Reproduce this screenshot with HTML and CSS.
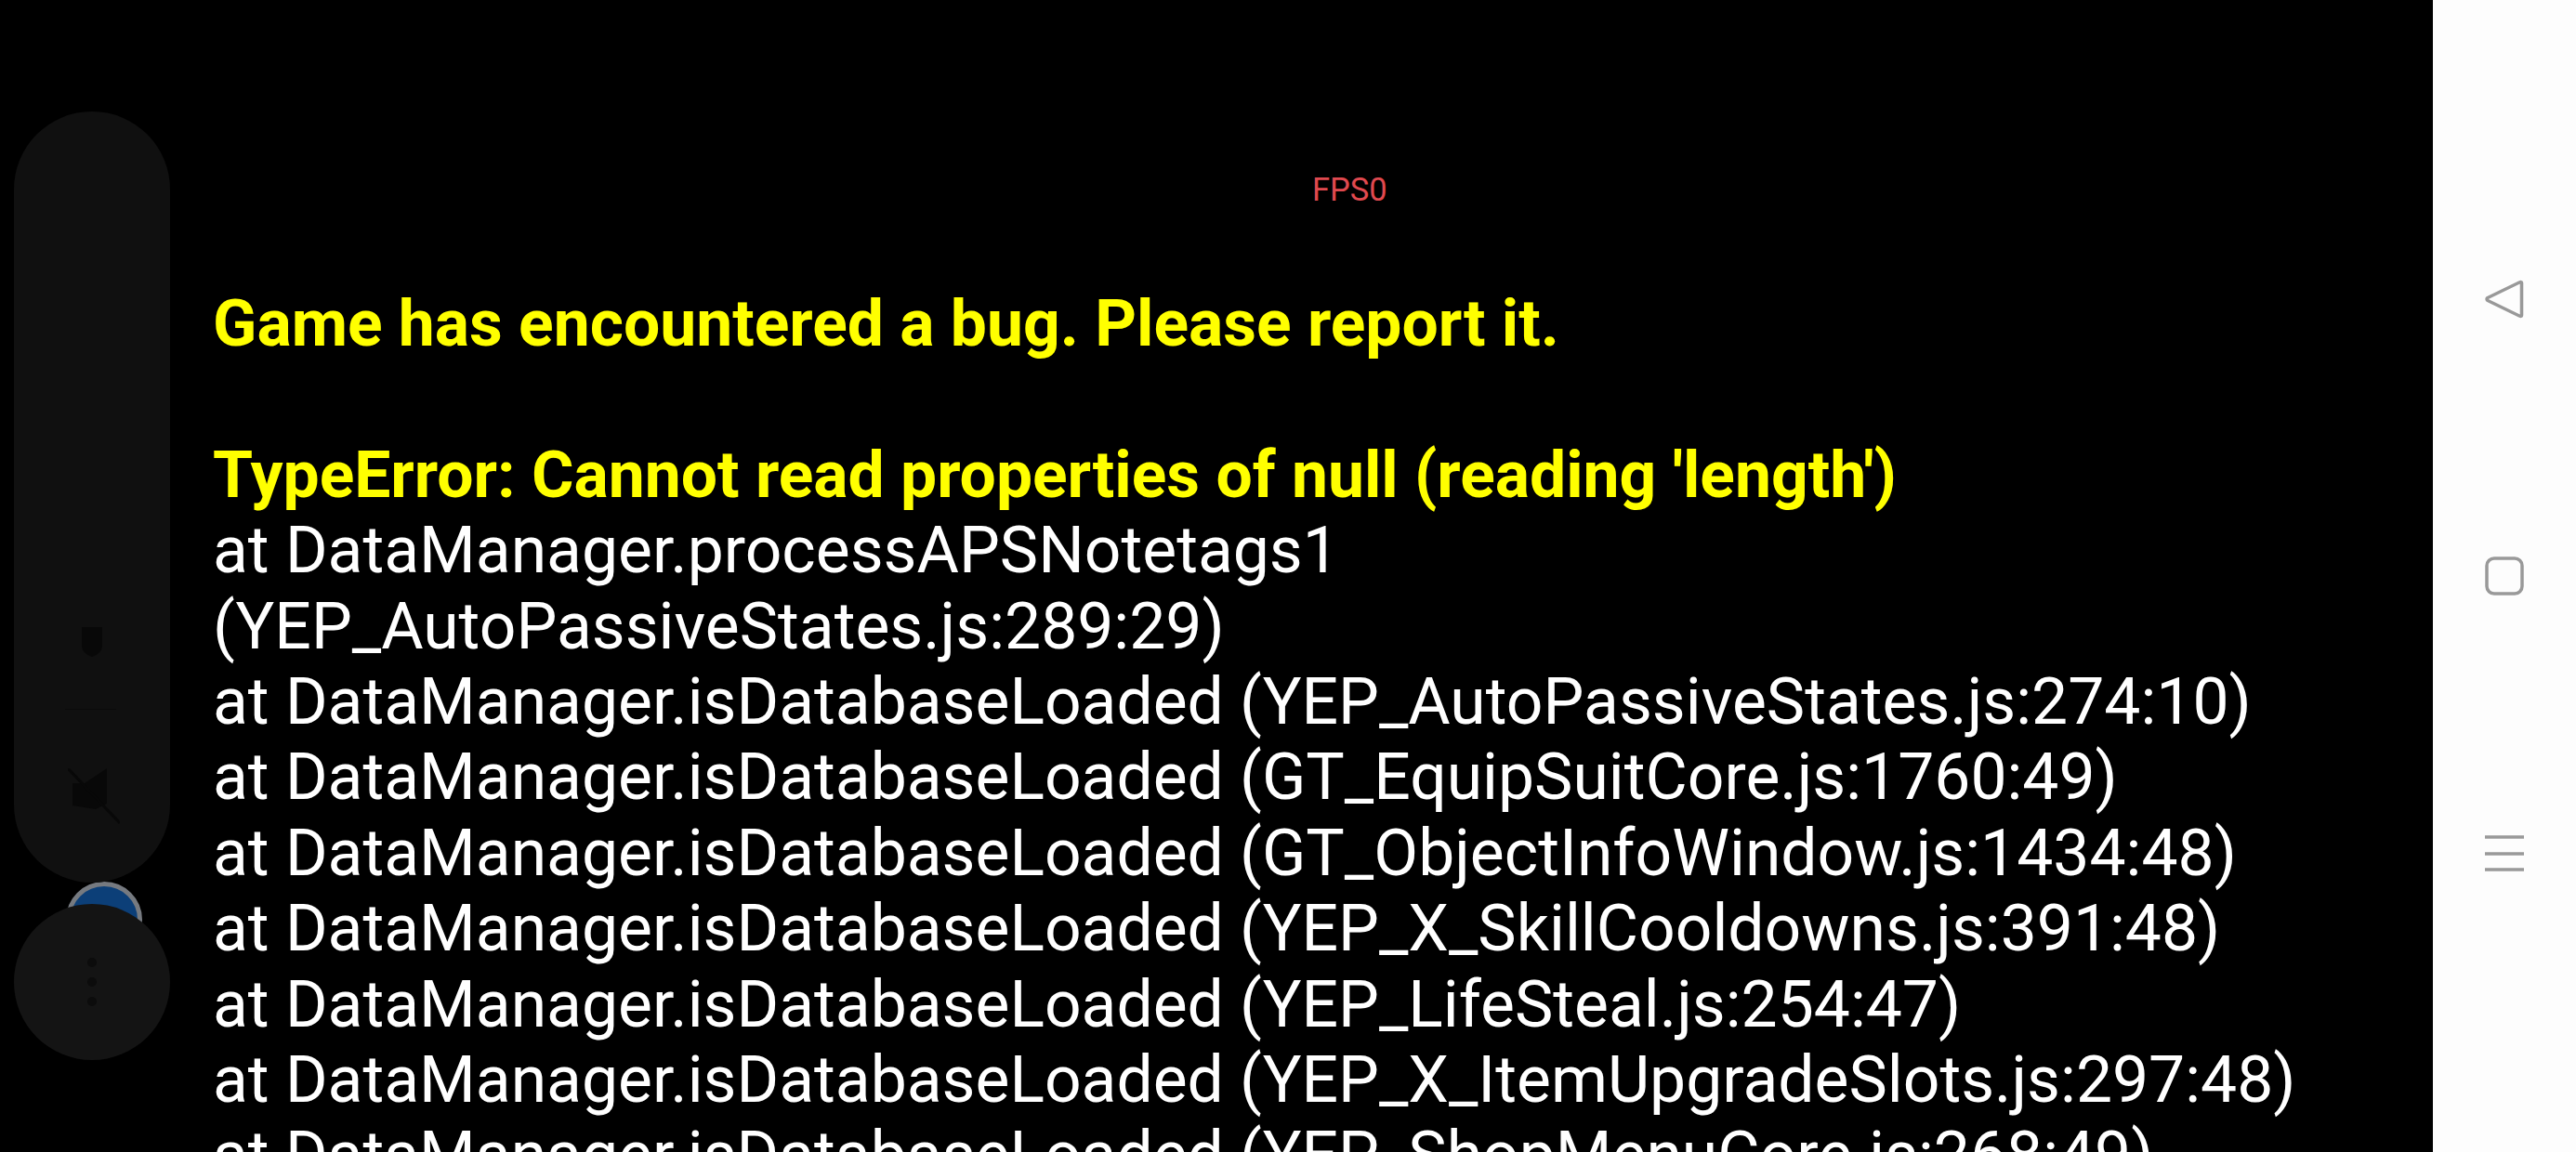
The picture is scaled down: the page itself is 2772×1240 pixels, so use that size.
FILE: index.html
```html
<!DOCTYPE html>
<html lang="en">
<head>
<meta charset="utf-8">
<title>Game error</title>
<link rel="stylesheet" href="styles.css">
</head>
<body>
<main class="game">
  <div class="fps">FPS0</div>
  <div class="error">
    <p class="headline">Game has encountered a bug. Please report it.</p>
    <p class="blank">&nbsp;</p>
    <p class="headline">TypeError: Cannot read properties of null (reading 'length')</p>
    <p>at DataManager.processAPSNotetags1 (YEP_AutoPassiveStates.js:289:29)</p>
    <p>at DataManager.isDatabaseLoaded (YEP_AutoPassiveStates.js:274:10)</p>
    <p>at DataManager.isDatabaseLoaded (GT_EquipSuitCore.js:1760:49)</p>
    <p>at DataManager.isDatabaseLoaded (GT_ObjectInfoWindow.js:1434:48)</p>
    <p>at DataManager.isDatabaseLoaded (YEP_X_SkillCooldowns.js:391:48)</p>
    <p>at DataManager.isDatabaseLoaded (YEP_LifeSteal.js:254:47)</p>
    <p>at DataManager.isDatabaseLoaded (YEP_X_ItemUpgradeSlots.js:297:48)</p>
    <p>at DataManager.isDatabaseLoaded (YEP_ShopMenuCore.js:268:49)</p>
  </div>
  <div class="float-avatar"></div>
  <div class="float-panel">
    <svg class="float-shield" viewBox="0 0 22 32"><path d="M0 0H22V20Q22 28 11 32Q0 28 0 20Z"/></svg>
    <div class="float-rule"></div>
    <svg class="float-mute" viewBox="0 0 56 60"><path d="M5 16H18L42 0V38L30 44L5 40Z"/><path class="mute-line" d="M0 0L56 59"/></svg>
  </div>
  <div class="float-more">
    <span class="dot"></span><span class="dot"></span><span class="dot"></span>
  </div>
</main>
<aside class="navbar">
  <svg class="nav-icon" viewBox="0 0 42 42"><path d="M39.5 3.5Q39.5 2 37 3L3 19.5Q1 21 3 22.5L37 39Q39.5 40 39.5 38.5Z"/></svg>
  <svg class="nav-icon" viewBox="0 0 42 42"><rect x="2" y="2" width="38" height="38" rx="8"/></svg>
  <svg class="nav-icon" viewBox="0 0 42 42"><path d="M0 4H42M0 22H42M0 39H42"/></svg>
</aside>
</body>
</html>
```

FILE: styles.css
```css
* { box-sizing: border-box; }
html, body { margin: 0; height: 100%; }
body {
  display: flex;
  width: 2772px;
  height: 1240px;
  overflow: hidden;
  background: #000;
  font-family: Roboto, "Liberation Sans", sans-serif;
}
.game {
  position: relative;
  flex: 1;
  height: 1240px;
  overflow: hidden;
  background: #000;
  padding: 184px 118px 0 229px;
}
.fps {
  height: 40px;
  margin-left: 1183px;
  font-size: 34.5px;
  line-height: 40px;
  color: #e0494f;
}
.error {
  margin-top: 84px;
  font-size: 69.6px;
  line-height: 81.4px;
  color: #fff;
}
.error p { margin: 0; }
.error .headline { color: #ff0; font-weight: 700; }
.float-panel {
  position: absolute;
  left: 15px;
  top: 120px;
  width: 168px;
  height: 830px;
  border-radius: 84px;
  background: #101010;
}
.float-shield {
  position: absolute;
  left: 73px;
  top: 555px;
  width: 22px;
  height: 32px;
  fill: #080808;
}
.float-rule {
  position: absolute;
  left: 55px;
  top: 643px;
  width: 55px;
  height: 1px;
  background: #0b0b0b;
}
.float-mute {
  position: absolute;
  left: 58px;
  top: 707px;
  width: 56px;
  height: 60px;
  fill: #080808;
}
.mute-line { fill: none; stroke: #080808; stroke-width: 3; }
.float-avatar {
  position: absolute;
  left: 71px;
  top: 949px;
  width: 82px;
  height: 82px;
  border-radius: 50%;
  border: 5px solid #767a80;
  background: #0c3f78;
}
.float-more {
  position: absolute;
  left: 15px;
  top: 973px;
  width: 168px;
  height: 168px;
  border-radius: 50%;
  background: #141414;
  display: flex;
  flex-direction: column;
  align-items: center;
  justify-content: center;
  gap: 11px;
}
.dot {
  width: 10px;
  height: 10px;
  border-radius: 50%;
  background: #0c0c0c;
}
.navbar {
  flex: 0 0 154px;
  height: 1240px;
  background: #fdfdfd;
  display: flex;
  flex-direction: column;
  align-items: center;
  padding-top: 301px;
  gap: 256px;
}
.nav-icon {
  width: 42px;
  height: 42px;
  fill: none;
  stroke: #999;
  stroke-width: 3.5;
  stroke-linejoin: round;
}
```
